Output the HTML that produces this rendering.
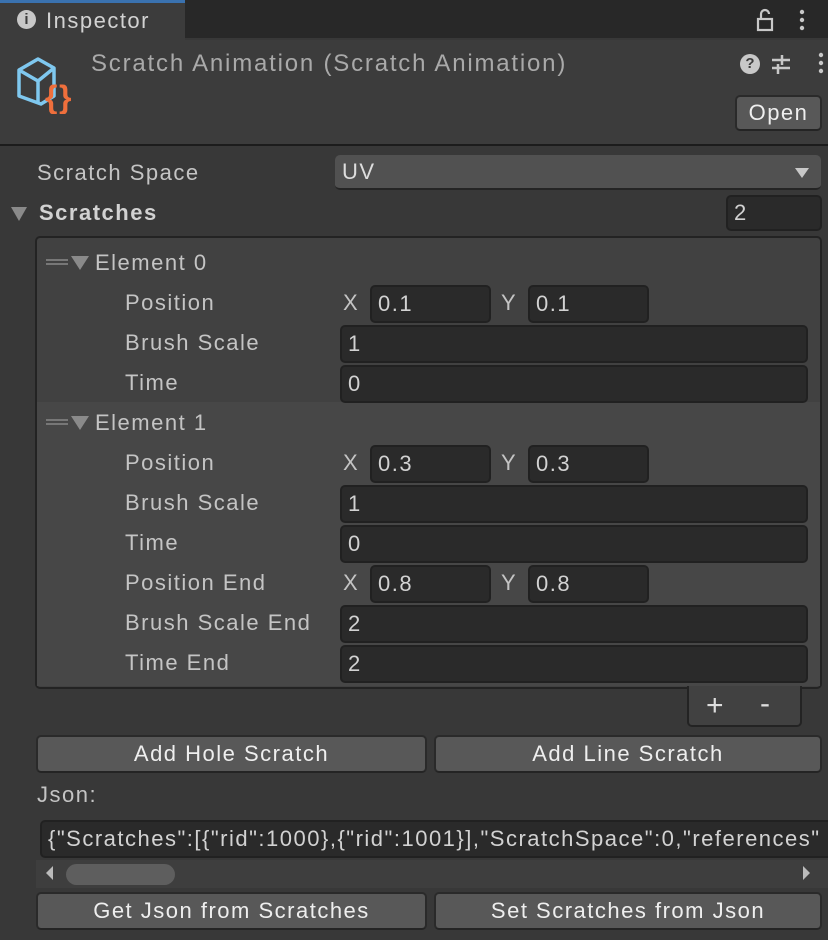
<!DOCTYPE html><html><head><style>
*{box-sizing:border-box;margin:0;padding:0}
body{width:828px;height:940px;background:#383838;font-family:"Liberation Sans",sans-serif;font-size:22px;letter-spacing:1.5px;color:#d2d2d2;position:relative;overflow:hidden}
.a{position:absolute;white-space:nowrap}
.f{position:absolute;background:#2a2a2a;border:2px solid #212121;border-radius:5px;height:38px;line-height:34px;padding-left:6px;color:#d2d2d2}
.b{position:absolute;background:#585858;border:2px solid #2a2a2a;border-bottom-color:#242424;border-radius:5px;height:38px;line-height:34px;text-align:center;color:#eee}
.l{position:absolute;line-height:40px;color:#c4c4c4}
</style></head><body>
<div class="a" style="left:0;top:0;width:828px;height:38px;background:#282828"></div>
<div class="a" style="left:0;top:0;width:185px;height:40px;background:#3c3c3c;border-top:3px solid #3a72b0"></div>
<div class="a" style="left:17px;top:10px;width:19px;height:19px;border-radius:50%;background:#c8c8c8;color:#3c3c3c;font-size:15px;font-weight:bold;text-align:center;line-height:19px;letter-spacing:0">i</div>
<div class="l" style="left:46px;top:1px;color:#d2d2d2">Inspector</div>
<svg class="a" style="left:755px;top:8px" width="50" height="24"><rect x="3" y="11" width="14" height="11" fill="none" stroke="#c8c8c8" stroke-width="2.2"/><path d="M6 11V6a4 4 0 0 1 8 0" fill="none" stroke="#c8c8c8" stroke-width="2.2"/><circle cx="47" cy="4" r="2.2" fill="#c8c8c8"/><circle cx="47" cy="12" r="2.2" fill="#c8c8c8"/><circle cx="47" cy="20" r="2.2" fill="#c8c8c8"/></svg>
<div class="a" style="left:0;top:40px;width:828px;height:106px;background:#3c3c3c;border-bottom:2px solid #1c1c1c"></div>
<svg class="a" style="left:12px;top:52px" width="70" height="62"><path d="M7 18 L26 7 L42 16 L42 44 L29 52 L7 44 Z M7 18 L26 29 L42 16 M26 29 L26 52" fill="none" stroke="#7fc8ef" stroke-width="3.5" stroke-linejoin="round"/><text x="33" y="56" font-family="Liberation Sans" font-weight="bold" font-size="32" fill="#ef6f3c">{}</text></svg>
<div class="l" style="left:91px;top:44px;font-size:24px;letter-spacing:1.8px;color:#a9a9a9">Scratch Animation (Scratch Animation)</div>
<div class="a" style="left:740px;top:54px;width:20px;height:20px;border-radius:50%;background:#c8c8c8;color:#3c3c3c;font-size:15px;font-weight:bold;text-align:center;line-height:20px;letter-spacing:0">?</div>
<svg class="a" style="left:770px;top:52px" width="56" height="24"><path d="M2 8h18M2 16h18M12 3v10M8 12v10" stroke="#c8c8c8" stroke-width="2.5"/><circle cx="51" cy="3" r="2.2" fill="#c8c8c8"/><circle cx="51" cy="11" r="2.2" fill="#c8c8c8"/><circle cx="51" cy="19" r="2.2" fill="#c8c8c8"/></svg>
<div class="b" style="left:735px;top:95px;width:87px;height:36px;line-height:32px">Open</div>
<div class="l" style="left:37px;top:153px">Scratch Space</div>
<div class="a" style="left:335px;top:155px;width:486px;height:35px;background:#515151;border-radius:5px;border-bottom:2px solid #242424;line-height:33px;padding-left:7px;color:#ddd">UV</div>
<div class="a" style="left:795px;top:168px;width:0;height:0;border-left:7px solid transparent;border-right:7px solid transparent;border-top:10px solid #c8c8c8"></div>
<div class="a" style="left:11px;top:207px;border-left:8px solid transparent;border-right:8px solid transparent;border-top:14px solid #8a8a8a"></div>
<div class="l" style="left:39px;top:193px;font-weight:bold;color:#d2d2d2">Scratches</div>
<div class="f" style="left:726px;top:195px;width:96px;height:36px;line-height:32px">2</div>
<div class="a" style="left:35px;top:236px;width:787px;height:453px;background:#414141;border:2px solid #232323;border-radius:5px"></div>
<div class="a" style="left:37px;top:402px;width:783px;height:284px;background:#474747"></div>
<div class="a" style="left:687px;top:686px;width:115px;height:41px;background:#414141;border:2px solid #232323;border-top:none;border-radius:0 0 5px 5px"></div>
<div class="l" style="left:706px;top:686px;font-size:30px;color:#ddd">+</div>
<div class="l" style="left:760px;top:684px;font-size:30px;color:#ddd">-</div>
<div class="a" style="left:46px;top:259px;width:22px;height:6px;border-top:2px solid #777;border-bottom:2px solid #777"></div>
<div class="a" style="left:71px;top:256px;border-left:9px solid transparent;border-right:9px solid transparent;border-top:14px solid #8a8a8a"></div>
<div class="l" style="left:95px;top:243px">Element 0</div>
<div class="l" style="left:125px;top:283px">Position</div>
<div class="l" style="left:343px;top:283px">X</div><div class="f" style="left:370px;top:285px;width:121px">0.1</div>
<div class="l" style="left:501px;top:283px">Y</div><div class="f" style="left:528px;top:285px;width:121px">0.1</div>
<div class="l" style="left:125px;top:323px">Brush Scale</div><div class="f" style="left:340px;top:325px;width:468px">1</div>
<div class="l" style="left:125px;top:363px">Time</div><div class="f" style="left:340px;top:365px;width:468px">0</div>
<div class="a" style="left:46px;top:419px;width:22px;height:6px;border-top:2px solid #777;border-bottom:2px solid #777"></div>
<div class="a" style="left:71px;top:416px;border-left:9px solid transparent;border-right:9px solid transparent;border-top:14px solid #8a8a8a"></div>
<div class="l" style="left:95px;top:403px">Element 1</div>
<div class="l" style="left:125px;top:443px">Position</div>
<div class="l" style="left:343px;top:443px">X</div><div class="f" style="left:370px;top:445px;width:121px">0.3</div>
<div class="l" style="left:501px;top:443px">Y</div><div class="f" style="left:528px;top:445px;width:121px">0.3</div>
<div class="l" style="left:125px;top:483px">Brush Scale</div><div class="f" style="left:340px;top:485px;width:468px">1</div>
<div class="l" style="left:125px;top:523px">Time</div><div class="f" style="left:340px;top:525px;width:468px">0</div>
<div class="l" style="left:125px;top:563px">Position End</div>
<div class="l" style="left:343px;top:563px">X</div><div class="f" style="left:370px;top:565px;width:121px">0.8</div>
<div class="l" style="left:501px;top:563px">Y</div><div class="f" style="left:528px;top:565px;width:121px">0.8</div>
<div class="l" style="left:125px;top:603px">Brush Scale End</div><div class="f" style="left:340px;top:605px;width:468px">2</div>
<div class="l" style="left:125px;top:643px">Time End</div><div class="f" style="left:340px;top:645px;width:468px">2</div>
<div class="b" style="left:36px;top:735px;width:391px">Add Hole Scratch</div>
<div class="b" style="left:434px;top:735px;width:388px">Add Line Scratch</div>
<div class="l" style="left:37px;top:775px">Json:</div>
<div class="f" style="left:40px;top:820px;width:790px;border-right:none;border-radius:5px 0 0 5px;padding-left:6px;overflow:hidden">{"Scratches":[{"rid":1000},{"rid":1001}],"ScratchSpace":0,"references"</div>
<div class="a" style="left:36px;top:860px;width:792px;height:28px;background:#3e3e3e"></div>
<div class="a" style="left:46px;top:866px;border-top:7px solid transparent;border-bottom:7px solid transparent;border-right:7px solid #bbb"></div>
<div class="a" style="left:803px;top:866px;border-top:7px solid transparent;border-bottom:7px solid transparent;border-left:7px solid #bbb"></div>
<div class="a" style="left:66px;top:864px;width:109px;height:21px;border-radius:11px;background:#5e5e5e"></div>
<div class="b" style="left:36px;top:892px;width:391px">Get Json from Scratches</div>
<div class="b" style="left:434px;top:892px;width:388px">Set Scratches from Json</div>
</body></html>
